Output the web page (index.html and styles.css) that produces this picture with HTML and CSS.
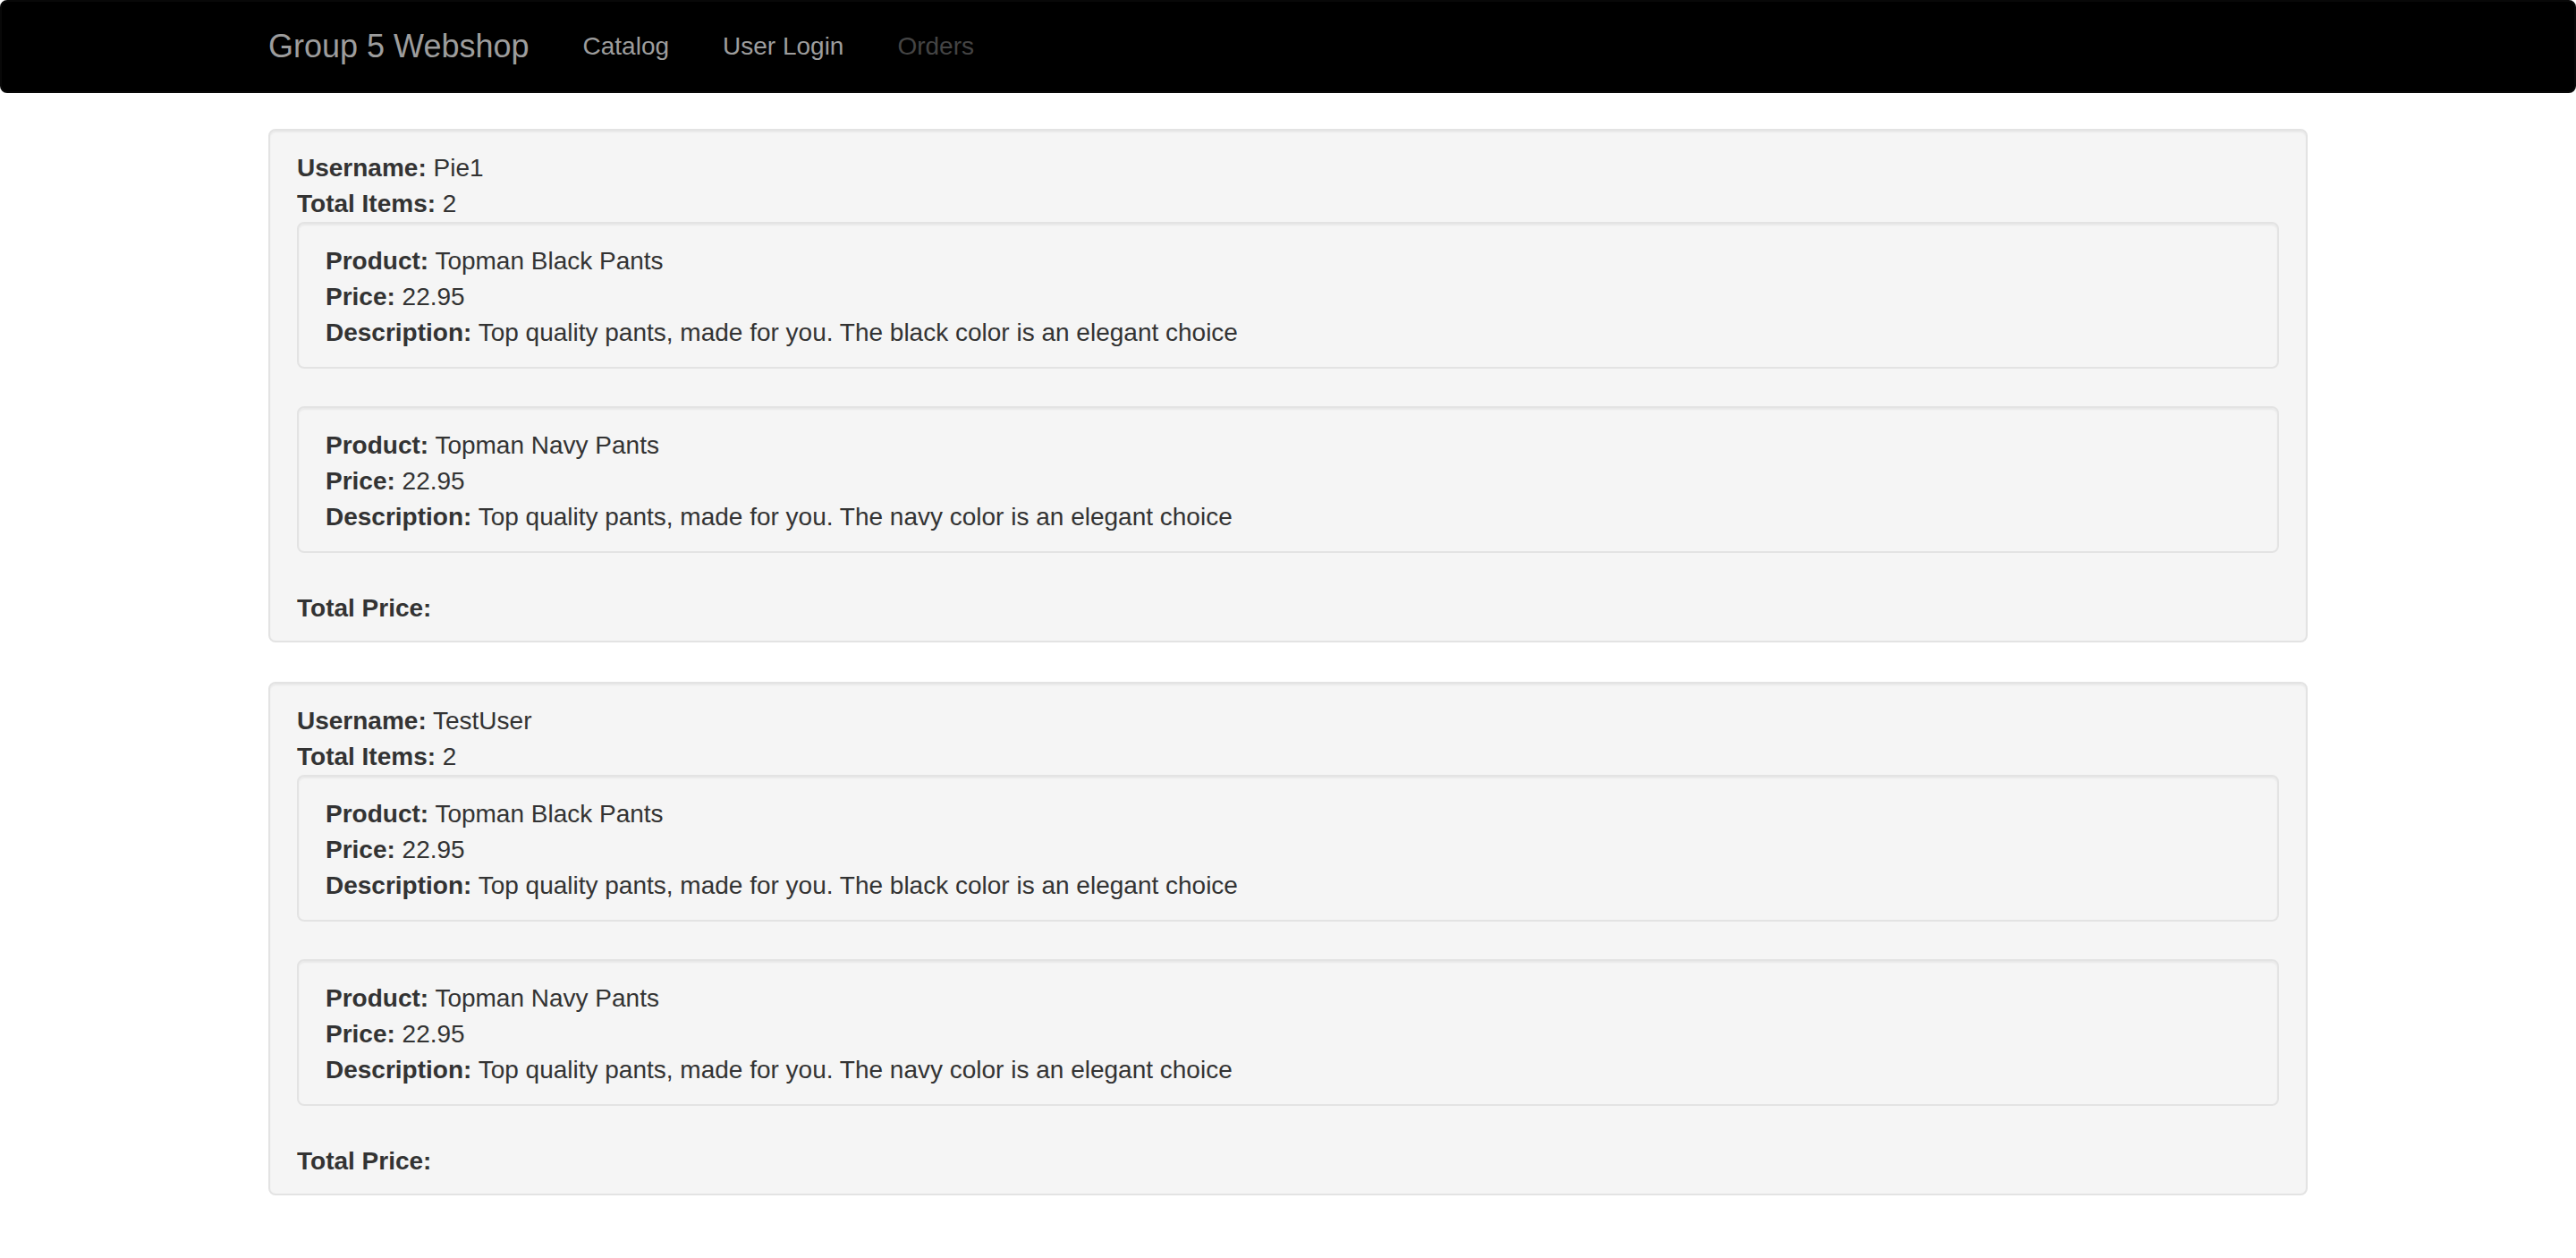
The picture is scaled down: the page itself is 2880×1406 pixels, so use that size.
FILE: index.html
```html
<!DOCTYPE html>
<html lang="en">
<head>
<meta charset="utf-8">
<title>Group 5 Webshop - Orders</title>
<link rel="stylesheet" href="styles.css">
</head>
<body>
<nav class="navbar">
  <div class="container nav-inner">
    <a class="brand" href="#">Group 5 Webshop</a>
    <ul class="nav">
      <li><a href="#">Catalog</a></li>
      <li><a href="#">User Login</a></li>
      <li><a class="disabled" href="#">Orders</a></li>
    </ul>
  </div>
</nav>
<div class="container">
  <div class="well order">
    <div class="line"><b>Username:</b> Pie1</div>
    <div class="line"><b>Total Items:</b> 2</div>
    <div class="well item">
      <div class="line"><b>Product:</b> Topman Black Pants</div>
      <div class="line"><b>Price:</b> 22.95</div>
      <div class="line"><b>Description:</b> Top quality pants, made for you. The black color is an elegant choice</div>
    </div>
    <div class="well item">
      <div class="line"><b>Product:</b> Topman Navy Pants</div>
      <div class="line"><b>Price:</b> 22.95</div>
      <div class="line"><b>Description:</b> Top quality pants, made for you. The navy color is an elegant choice</div>
    </div>
    <div class="line"><b>Total Price:</b></div>
  </div>
  <div class="well order">
    <div class="line"><b>Username:</b> TestUser</div>
    <div class="line"><b>Total Items:</b> 2</div>
    <div class="well item">
      <div class="line"><b>Product:</b> Topman Black Pants</div>
      <div class="line"><b>Price:</b> 22.95</div>
      <div class="line"><b>Description:</b> Top quality pants, made for you. The black color is an elegant choice</div>
    </div>
    <div class="well item">
      <div class="line"><b>Product:</b> Topman Navy Pants</div>
      <div class="line"><b>Price:</b> 22.95</div>
      <div class="line"><b>Description:</b> Top quality pants, made for you. The navy color is an elegant choice</div>
    </div>
    <div class="line"><b>Total Price:</b></div>
  </div>
</div>
</body>
</html>
```
FILE: styles.css
```css
* { box-sizing: border-box; }

html, body {
  margin: 0;
  padding: 0;
  background: #ffffff;
}

body {
  font-family: "Liberation Sans", Arial, Helvetica, sans-serif;
  font-size: 28px;
  line-height: 40px;
  color: #333333;
}

.container {
  width: 2280px;
  margin: 0 auto;
}

.navbar {
  background: #000000;
  border: 2px solid #080808;
  border-radius: 8px;
  height: 104px;
  margin-bottom: 40px;
}

.nav-inner {
  display: flex;
  align-items: flex-start;
}

.brand {
  display: block;
  margin-left: -30px;
  padding: 30px 30px;
  height: 100px;
  font-size: 36px;
  line-height: 40px;
  color: #9d9d9d;
  text-decoration: none;
}

.nav {
  display: flex;
  list-style: none;
  margin: 0;
  padding: 0;
}

.nav a {
  display: block;
  padding: 30px 30px;
  line-height: 40px;
  font-size: 28px;
  color: #9d9d9d;
  text-decoration: none;
}

.nav a.disabled {
  color: #444444;
}

.well {
  background: #f5f5f5;
  border: 2px solid #e3e3e3;
  border-radius: 8px;
  box-shadow: inset 0 2px 2px rgba(0, 0, 0, 0.05);
}

.order {
  padding: 22px 30px 16px;
  margin-bottom: 44px;
}

.item {
  padding: 22px 30px 18px;
  margin-bottom: 42px;
}

.line b {
  font-weight: 700;
}
```
